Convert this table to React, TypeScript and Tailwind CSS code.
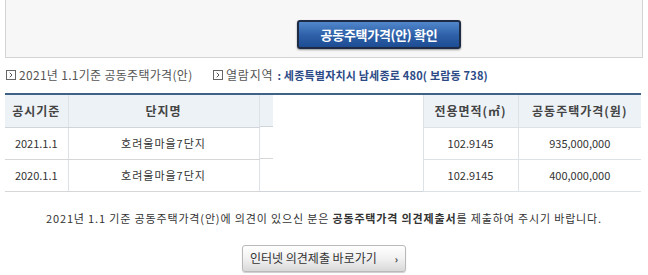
import { ChevronRight } from "lucide-react";

const font = { fontFamily: '"Noto Sans CJK KR", "Noto Sans", sans-serif' };

const rows = [
  { date: "2021.1.1", name: "호려울마을7단지", area: "102.9145", price: "935,000,000" },
  { date: "2020.1.1", name: "호려울마을7단지", area: "102.9145", price: "400,000,000" },
];

function BoxIcon() {
  return (
    <span className="inline-flex items-center justify-center w-[10px] h-[10px] border border-[#666] mr-[3px] text-[#555]">
      <ChevronRight className="w-[8px] h-[8px]" strokeWidth={3} />
    </span>
  );
}

export default function App() {
  return (
    <div className="w-[648px] h-[275px] bg-white overflow-hidden text-[#444]" style={font}>
      <div className="mx-[5px] h-[58px] bg-[#f7f7f7] border border-t-0 border-[#d4d4d4] flex items-end justify-center pb-[8px]">
        <button className="ml-[110px] w-[164px] h-[29px] rounded-[3px] border-2 border-[#1d2b44] bg-gradient-to-b from-[#5287cc] via-[#2f62aa] to-[#1d4c93] text-white text-[13px] font-bold tracking-[-0.3px] shadow-[0_1px_2px_rgba(0,0,0,0.4)]">
          공동주택가격(안) 확인
        </button>
      </div>

      <div className="flex items-center h-[18px] mt-[8px] px-[6px] text-[12px] leading-none">
        <div className="flex items-center w-[207px] text-[#555] tracking-[0.3px]">
          <BoxIcon />
          2021년 1.1기준 공동주택가격(안)
        </div>
        <div className="flex items-center">
          <BoxIcon />
          <span className="text-[#555] tracking-[0.8px]">열람지역</span>
          <span className="text-[#2b4a86] font-bold ml-[4px] text-[11px] tracking-[0.2px]">: 세종특별자치시 남세종로 480( 보람동 738)</span>
        </div>
      </div>

      <table className="mt-[9px] ml-[5px] w-[636px] border-collapse table-fixed border-t-2 border-[#3f6386]">
        <colgroup>
          <col className="w-[63px]" />
          <col className="w-[191px]" />
          <col className="w-[164px]" />
          <col className="w-[95px]" />
          <col className="w-[123px]" />
        </colgroup>
        <thead>
          <tr className="h-[33px] text-[12px] font-bold text-[#444] tracking-[1px]">
            <th className="bg-[#edf2f6] border-b border-[#cfd5da] border-r border-r-[#dde2e6]">공시기준</th>
            <th className="bg-[#edf2f6] border-b border-[#cfd5da]">단지명</th>
            <th className="p-0 border-l border-[#dde2e6] align-top">
              <div className="w-[13px] h-[32px] bg-[#edf2f6] border-b border-[#cfd5da]" />
            </th>
            <th className="bg-[#edf2f6] border-b border-[#cfd5da] border-l border-[#dde2e6]">전용면적(㎡)</th>
            <th className="bg-[#edf2f6] border-b border-[#cfd5da] border-l border-[#dde2e6]">공동주택가격(원)</th>
          </tr>
        </thead>
        <tbody>
          {rows.map((r, i) => (
            <tr key={i} className={`h-[32px] text-[11px] text-[#333] ${i === rows.length - 1 ? "border-b border-[#cfd5da]" : ""}`}>
              <td className="text-center border-b border-[#d6d6d6] border-r border-r-[#dde2e6]">{r.date}</td>
              <td className="text-center border-b border-[#d6d6d6] tracking-[1px]">{r.name}</td>
              <td className="p-0 border-l border-[#dde2e6] align-top">
                <div className={`w-[13px] h-[32px] ${i === rows.length - 1 ? "" : "border-b border-[#d6d6d6]"}`} />
              </td>
              <td className="text-center border-b border-[#d6d6d6] border-l border-[#dde2e6]">{r.area}</td>
              <td className="text-center border-b border-[#d6d6d6] border-l border-[#dde2e6]">{r.price}</td>
            </tr>
          ))}
        </tbody>
      </table>

      <p className="mt-[18px] text-center text-[11px] text-[#333] tracking-[0.85px]">
        2021년 1.1 기준 공동주택가격(안)에 의견이 있으신 분은{" "}
        <b className="font-bold">공동주택가격 의견제출서</b>를 제출하여 주시기 바랍니다.
      </p>

      <div className="flex justify-center mt-[18px]">
        <button className="w-[164px] h-[27px] rounded-[3px] border border-[#b9b9b9] bg-gradient-to-b from-white via-[#f1f1f1] to-[#d9d9d9] text-[12px] text-[#333] flex items-center justify-center gap-[18px] shadow-[0_1px_1px_rgba(0,0,0,0.2)]">
          <span>인터넷 의견제출 바로가기</span>
          <span className="text-[10px] font-bold">›</span>
        </button>
      </div>
    </div>
  );
}
